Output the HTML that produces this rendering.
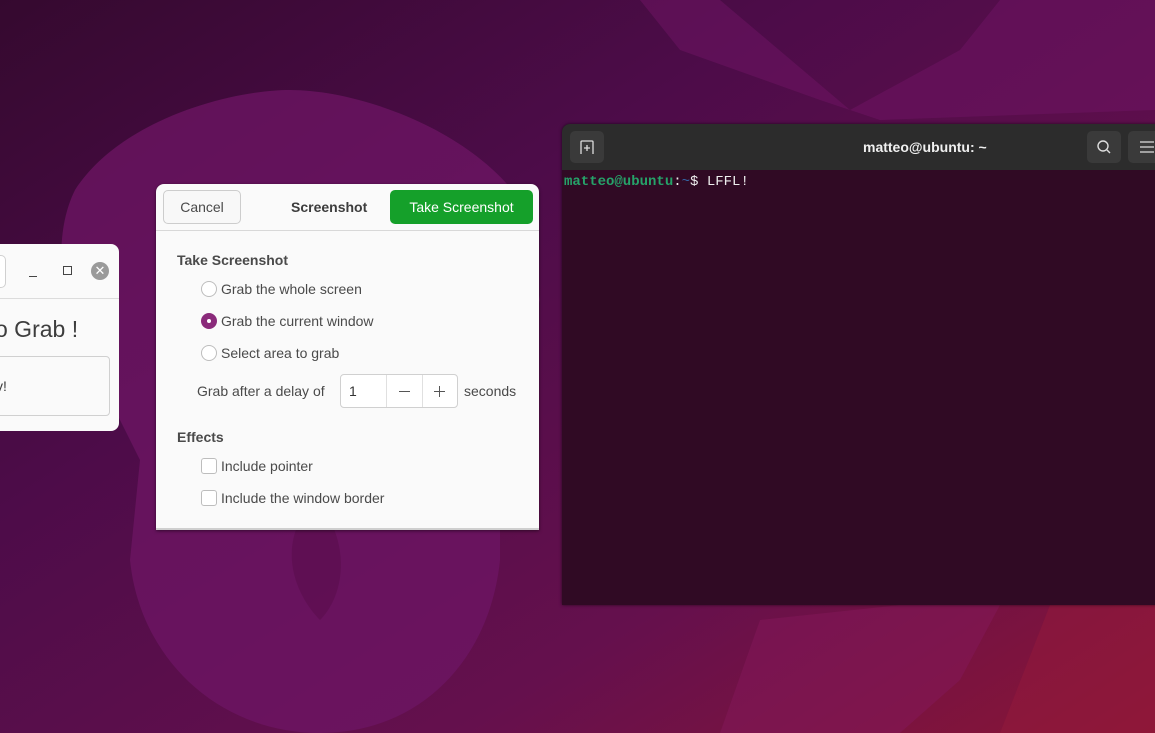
<!DOCTYPE html>
<html><head><style>
body{margin:0;width:1155px;height:733px;overflow:hidden;position:relative;font-family:"Liberation Sans",sans-serif;}
.bg{position:absolute;left:0;top:0}
.abs{position:absolute}
.dlg{left:156px;top:184px;width:383px;height:346px;background:#fafafa;border-radius:8px 8px 0 0;box-shadow:0 1px 3px rgba(0,0,0,.5);border-bottom:2px solid #cfcfcf;box-sizing:border-box}
.t{position:absolute;font-size:14px;color:#4a4a4a;white-space:nowrap}
.radio{position:absolute;width:14px;height:14px;border:1px solid #bdbdbd;border-radius:50%;background:#fff}
.chk{position:absolute;width:14px;height:14px;border:1px solid #bdbdbd;border-radius:3px;background:#fff}
</style></head><body>
<svg class="bg" width="1155" height="733">
<defs>
<linearGradient id="g" x1="0" y1="0" x2="1" y2="1">
<stop offset="0" stop-color="#35092f"/><stop offset="0.35" stop-color="#4d0c49"/><stop offset="0.7" stop-color="#65104d"/><stop offset="1" stop-color="#8a1535"/>
</linearGradient>
</defs>
<rect width="1155" height="733" fill="url(#g)"/>
<path d="M75 190 C120 120 230 90 290 90 C360 90 470 130 520 200 L540 300 L500 430 L500 560 C490 660 420 733 320 733 C220 733 140 660 130 560 L140 460 L100 380 C60 320 50 240 75 190Z" fill="#6e1664" opacity="0.75"/>
<path d="M640 0 L720 0 L850 110 L960 50 L1000 0 L1155 0 L1155 110 L880 120 L820 100 L680 50Z" fill="#6e1462" opacity="0.55"/>
<path d="M720 733 L760 620 L900 605 L1000 605 L960 680 L900 733Z" fill="#84175a" opacity="0.5"/>
<path d="M1050 605 L1155 605 L1155 733 L1000 733Z" fill="#94193c" opacity="0.5"/>
<path d="M300 520 C280 560 300 600 320 620 C340 600 350 560 330 520Z" fill="#5a0e4c" opacity="0.6"/>
</svg>

<div class="abs" style="left:-10px;top:244px;width:129px;height:187px;background:#fafafa;border-radius:8px;">
 <div class="abs" style="left:0;top:54px;width:129px;height:1px;background:#dcdcdc"></div>
 <div class="abs" style="left:0;top:11px;width:15px;height:31px;border:1px solid #d0d0d0;border-left:none;border-radius:0 5px 5px 0;background:#fff"></div>
 <div class="abs" style="left:39px;top:32px;width:8px;height:1px;background:#444"></div>
 <div class="abs" style="left:73px;top:22px;width:7px;height:7px;border:1px solid #444"></div>
 <div class="abs" style="left:101px;top:18px;width:18px;height:18px;border-radius:50%;background:#9a9a9a;color:#fff;font-size:13px;line-height:18px;text-align:center">✕</div>
 <div class="t" style="left:5px;top:72px;font-size:23px;color:#3d3d3d">o Grab !</div>
 <div class="abs" style="left:-2px;top:112px;width:120px;height:58px;border:1px solid #d0d0d0;border-radius:4px;background:#fafafa"></div>
 <div class="t" style="left:6px;top:134px;font-size:14px;color:#3d3d3d">v!</div>
</div>

<div class="abs dlg">
 <div class="abs" style="left:0;top:46px;width:383px;height:1px;background:#d8d8d8"></div>
 <div class="abs" style="left:7px;top:6px;width:76px;height:32px;border:1px solid #cdcdcd;border-radius:5px;background:#f8f8f8;font-size:14px;color:#4a4a4a;text-align:center;line-height:32px">Cancel</div>
 <div class="t" style="left:135px;top:15px;font-weight:bold;color:#3d3d3d">Screenshot</div>
 <div class="abs" style="left:234px;top:6px;width:143px;height:34px;background:#15a02a;border-radius:5px;color:#fff;font-size:14px;text-align:center;line-height:34px">Take Screenshot</div>
 <div class="t" style="left:21px;top:68px;font-weight:bold;color:#4a4a4a">Take Screenshot</div>
 <div class="radio" style="left:45px;top:97px"></div><div class="t" style="left:65px;top:97px">Grab the whole screen</div>
 <div class="abs" style="left:45px;top:129px;width:16px;height:16px;border-radius:50%;background:#8a2a7a"></div><div class="abs" style="left:51px;top:135px;width:4px;height:4px;border-radius:50%;background:#fff"></div>
 <div class="t" style="left:65px;top:129px">Grab the current window</div>
 <div class="radio" style="left:45px;top:161px"></div><div class="t" style="left:65px;top:161px">Select area to grab</div>
 <div class="t" style="left:41px;top:199px">Grab after a delay of</div>
 <div class="abs" style="left:184px;top:190px;width:116px;height:32px;border:1px solid #d0d0d0;border-radius:4px;background:#fff"></div>
 <div class="abs" style="left:230px;top:191px;width:1px;height:32px;background:#e0e0e0"></div>
 <div class="abs" style="left:266px;top:191px;width:1px;height:32px;background:#e0e0e0"></div>
 <div class="t" style="left:193px;top:199px;color:#333">1</div>
 <div class="abs" style="left:243px;top:207px;width:11px;height:1px;background:#555"></div>
 <div class="abs" style="left:278px;top:207px;width:11px;height:1px;background:#555"></div>
 <div class="abs" style="left:283px;top:202px;width:1px;height:11px;background:#555"></div>
 <div class="t" style="left:308px;top:199px">seconds</div>
 <div class="t" style="left:21px;top:245px;font-weight:bold;color:#4a4a4a">Effects</div>
 <div class="chk" style="left:45px;top:274px"></div><div class="t" style="left:65px;top:274px">Include pointer</div>
 <div class="chk" style="left:45px;top:306px"></div><div class="t" style="left:65px;top:306px">Include the window border</div>
</div>

<div class="abs" style="left:562px;top:124px;width:600px;height:481px;background:#300a24;border-radius:8px 0 0 0;box-shadow:0 0 3px rgba(0,0,0,.6)">
 <div class="abs" style="left:0;top:0;width:600px;height:46px;background:#2c2c2c;border-radius:8px 0 0 0"></div>
 <div class="abs" style="left:8px;top:7px;width:34px;height:32px;background:#3a3a3a;border-radius:5px"></div>
 <svg class="abs" style="left:17px;top:15px" width="16" height="16"><path d="M2 15 V3 Q2 2 3 2 H13 Q14 2 14 3 V15 M8 6 V12 M5 9 H11" stroke="#ddd" stroke-width="1.3" fill="none"/></svg>
 <div class="t" style="left:301px;top:15px;color:#f0f0f0;font-weight:bold;font-size:14px">matteo@ubuntu: ~</div>
 <div class="abs" style="left:525px;top:7px;width:34px;height:32px;background:#3a3a3a;border-radius:5px"></div>
 <svg class="abs" style="left:534px;top:15px" width="16" height="16"><circle cx="7" cy="7" r="5" stroke="#ddd" stroke-width="1.4" fill="none"/><path d="M11 11 L14 14" stroke="#ddd" stroke-width="1.4"/></svg>
 <div class="abs" style="left:566px;top:7px;width:34px;height:32px;background:#3a3a3a;border-radius:5px"></div>
 <svg class="abs" style="left:578px;top:16px" width="14" height="14"><path d="M0 2H14M0 7H14M0 12H14" stroke="#ddd" stroke-width="1.3"/></svg>
 <div class="t" style="left:2px;top:50px;font-family:'Liberation Mono',monospace;font-size:14px;color:#26a269"><b>matteo@ubuntu</b><span style="color:#eee">:</span><span style="color:#3465a4">~</span><span style="color:#eee">$ LFFL!</span></div>
</div>
</body></html>
